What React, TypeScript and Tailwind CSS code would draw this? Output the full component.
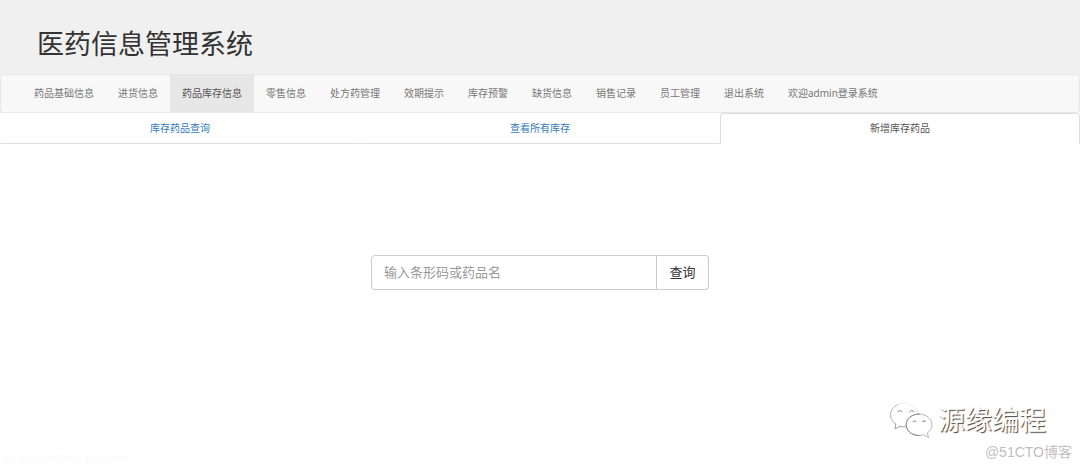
const navItems = [
  { label: "药品基础信息" },
  { label: "进货信息" },
  { label: "药品库存信息", active: true },
  { label: "零售信息" },
  { label: "处方药管理" },
  { label: "效期提示" },
  { label: "库存预警" },
  { label: "缺货信息" },
  { label: "销售记录" },
  { label: "员工管理" },
  { label: "退出系统" },
  { label: "欢迎admin登录系统" },
];

const tabs = [
  { label: "库存药品查询" },
  { label: "查看所有库存" },
  { label: "新增库存药品", active: true },
];

const WechatLogo = () => (
  <svg viewBox="0 0 46 40" className="w-[46px] h-10" fill="none" strokeLinecap="round" strokeLinejoin="round">
    {/* Large bubble */}
    <path d="M10 4.500C5.500 6.500 2.500 10.300 2.500 14.800c0 3.800 2 7 5.200 9.200" stroke="#b0b0b0" strokeWidth="1" />
    <path d="M7.700 24L7 29l5-2.800c1.800.5 3.500.7 5.200.6" stroke="#a0a0a0" strokeWidth="1" />
    <path d="M10 4.500C17 1 28 4.500 29.500 13.500" stroke="#efefef" strokeWidth="1" />
    <path d="M10 11.800a1.800 1.800 0 0 1 3.500 0M22 11.800a1.800 1.800 0 0 1 3.500 0" stroke="#909090" strokeWidth="1" />
    {/* Small bubble */}
    <path
      d="M31 14c-7.200 0-12.800 4.800-12.800 10.800S23.800 35.500 31 35.500c1.600 0 3.200-.2 4.600-.7l4.900 2.700-1.200-4.500c2.900-2 4.700-4.900 4.700-8.200C44 18.800 38.200 14 31 14z"
      fill="#fff"
      stroke="#b4b4b4"
      strokeWidth="1"
    />
    <path d="M31 14c-7.200 0-12.800 4.800-12.800 10.800S23.800 35.500 31 35.500" stroke="#8c8c8c" strokeWidth="1" />
    <path d="M25 21.800a1.600 1.600 0 0 1 3 0M34.500 21.800a1.600 1.600 0 0 1 3 0" stroke="#808080" strokeWidth="1" />
  </svg>
);

const App = () => {
  return (
    <div className="relative min-h-screen bg-white font-['Noto_Sans','Noto_Sans_CJK_SC',sans-serif] text-[#333]">
      <header className="bg-[#f0f0f0] px-[37px] pt-[25px] pb-[11px]">
        <h1 className="text-[27px] leading-[38px] font-normal">医药信息管理系统</h1>
      </header>

      <div className="bg-[#f0f0f0]">
        <nav className="flex h-[39px] rounded border border-[#e7e7e7] bg-[#f8f8f8] pl-[21px]">
          {navItems.map((item) => (
            <a
              key={item.label}
              href="#"
              className={`flex items-center px-3 text-[10px] whitespace-nowrap ${
                item.active ? "bg-[#e7e7e7] text-[#555]" : "text-[#777]"
              }`}
            >
              {item.label}
            </a>
          ))}
        </nav>
      </div>

      <div className="grid grid-cols-3">
        {tabs.map((tab) => (
          <a
            key={tab.label}
            href="#"
            className={`flex h-[31px] items-center justify-center border text-[10px] ${
              tab.active
                ? "rounded-t border-[#ddd] border-b-transparent text-[#555]"
                : "border-transparent border-b-[#ddd] text-[#337ab7]"
            }`}
          >
            {tab.label}
          </a>
        ))}
      </div>

      <main className="flex justify-center pt-[111px]">
        <form className="flex h-[35px] w-[338px]">
          <input
            type="text"
            aria-label="输入条形码或药品名"
            placeholder="输入条形码或药品名"
            className="min-w-0 flex-1 rounded-l border border-[#ccc] px-3 text-[13px] placeholder:text-[#999]"
          />
          <button type="button" className="w-[52px] rounded-r border border-l-0 border-[#ccc] bg-white text-[13px]">
            查询
          </button>
        </form>
      </main>

      {/* Status text and watermarks */}
      <div className="absolute bottom-0.5 left-1 text-[11px] leading-4 text-[#fafafa]">localhost:8080/addstore</div>
      <div className="absolute right-[34px] bottom-7 flex items-center gap-1">
        <WechatLogo />
        <span className="text-[27px] leading-10 text-white [text-shadow:1px_1px_1px_#444]">源缘编程</span>
      </div>
      <div className="absolute right-2 bottom-2 font-['Liberation_Sans','Noto_Sans_CJK_SC',sans-serif] text-[14px] leading-4 text-[#c0c0c0]">
        @51CTO博客
      </div>
    </div>
  );
};

export default App;
